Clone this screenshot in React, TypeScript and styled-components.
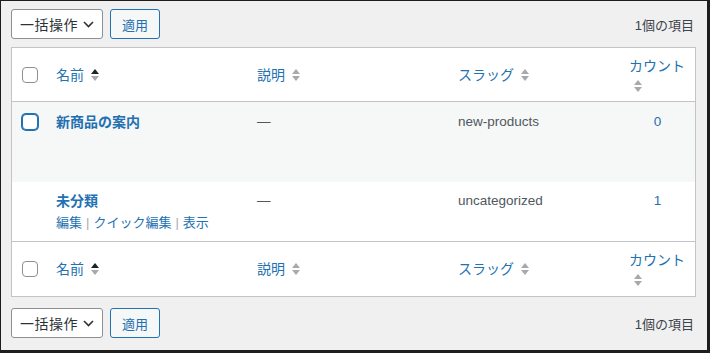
import React from 'react';
import styled, { createGlobalStyle } from 'styled-components';

const GlobalStyle = createGlobalStyle`
  body {
    margin: 0;
    font-family: "Liberation Sans", "Noto Sans CJK JP", sans-serif;
    color: #3c434a;
  }
`;

const COLS = '34px 201px 201px 171px 77px';

const Frame = styled.div`
  box-sizing: border-box;
  width: 710px;
  height: 353px;
  padding: 8px 11px 0 10px;
  background: #f0f0f1;
  border-style: solid;
  border-color: #1d1d1d;
  border-width: 1px 3px 3px 1px;
  display: flex;
  flex-direction: column;
`;

const Toolbar = styled.div<{ $bottom?: boolean }>`
  display: flex;
  align-items: center;
  gap: 7px;
  height: 30px;
  margin-top: ${(p) => (p.$bottom ? '11px' : '0')};
`;

const BulkSelect = styled.button`
  box-sizing: border-box;
  height: 30px;
  width: 92px;
  padding: 0 8px 0 8px;
  display: flex;
  align-items: center;
  justify-content: space-between;
  background: #fff;
  border: 1px solid #8c8f94;
  border-radius: 3px;
  font-family: inherit;
  font-size: 14px;
  letter-spacing: 0.5px;
  color: #2c3338;
  cursor: pointer;
`;

const ApplyButton = styled.button`
  box-sizing: border-box;
  height: 30px;
  padding: 0 11px;
  background: #f6f7f7;
  border: 1px solid #2271b1;
  border-radius: 3px;
  font-family: inherit;
  font-size: 13px;
  color: #2271b1;
  cursor: pointer;
`;

const ItemCount = styled.span`
  margin-left: auto;
  margin-right: 2px;
  font-size: 13px;
  color: #3c434a;
`;

const Table = styled.div`
  margin-top: 8px;
  background: #fff;
  border: 1px solid #c3c4c7;
`;

const HeadRow = styled.div<{ $foot?: boolean }>`
  display: grid;
  grid-template-columns: ${COLS};
  height: ${(p) => (p.$foot ? '54px' : '53px')};
  align-items: center;
  border-bottom: ${(p) => (p.$foot ? 'none' : '1px solid #c3c4c7')};
  border-top: ${(p) => (p.$foot ? '1px solid #c3c4c7' : 'none')};
`;

const HeadCell = styled.div<{ $stacked?: boolean }>`
  padding: 0 10px;
  font-size: 14px;
  color: #2271b1;
  display: flex;
  flex-direction: ${(p) => (p.$stacked ? 'column' : 'row')};
  align-items: ${(p) => (p.$stacked ? 'flex-start' : 'center')};
  gap: ${(p) => (p.$stacked ? '4px' : '7px')};
  white-space: nowrap;
  line-height: 18px;
`;

const IndicatorBox = styled.span`
  display: flex;
  padding-left: 5px;
`;

const CheckCell = styled.div<{ $top?: boolean }>`
  padding-left: 10px;
  align-self: ${(p) => (p.$top ? 'start' : 'center')};
  padding-top: ${(p) => (p.$top ? '12px' : '0')};
  display: flex;
`;

const Checkbox = styled.input.attrs({ type: 'checkbox' })<{ $focus?: boolean }>`
  appearance: none;
  box-sizing: border-box;
  width: 16px;
  height: 16px;
  margin: 0;
  background: #fff;
  border: 1px solid ${(p) => (p.$focus ? '#2271b1' : '#8c8f94')};
  border-radius: 4px;
  box-shadow: ${(p) => (p.$focus ? '0 0 0 1px #2271b1' : 'none')};
`;

const BodyRow = styled.div<{ $alt?: boolean; $height: number }>`
  display: grid;
  grid-template-columns: ${COLS};
  align-items: start;
  height: ${(p) => p.$height}px;
  background: ${(p) => (p.$alt ? '#f6f7f7' : '#fff')};
`;

const Cell = styled.div<{ $center?: boolean; $top: number }>`
  padding: ${(p) => p.$top}px 10px 0;
  font-size: 13.5px;
  line-height: 20px;
  color: #50575e;
  text-align: ${(p) => (p.$center ? 'center' : 'left')};
`;

const RowTitle = styled.a`
  display: block;
  font-size: 14px;
  font-weight: 700;
  line-height: 20px;
  color: #2271b1;
  text-decoration: none;
`;

const RowActions = styled.div`
  margin-top: 2px;
  font-size: 13px;
  line-height: 20px;
  color: #a7aaad;
  white-space: nowrap;
`;

const ActionLink = styled.a`
  color: #2271b1;
  text-decoration: none;
`;

const Sep = styled.span`
  margin: 0 4px;
  color: #a7aaad;
`;

const CountLink = styled.a`
  color: #2271b1;
  text-decoration: none;
`;

const SortIndicator = ({ asc }: { asc?: boolean }) => (
  <svg width="8" height="14" viewBox="0 0 8 14" style={{ flex: 'none' }}>
    <polygon points="0,6 4,1 8,6" fill={asc ? '#1d2327' : '#a7aaad'} />
    <polygon points="0,8 8,8 4,13" fill="#a7aaad" />
  </svg>
);

const Chevron = () => (
  <svg width="11" height="7" viewBox="0 0 11 7">
    <path d="M1 1l4.5 4.5L10 1" fill="none" stroke="#2c3338" strokeWidth="1.6" />
  </svg>
);

const BulkBar = ({ bottom }: { bottom?: boolean }) => (
  <Toolbar $bottom={bottom}>
    <BulkSelect>
      <span>一括操作</span>
      <Chevron />
    </BulkSelect>
    <ApplyButton>適用</ApplyButton>
    <ItemCount>1個の項目</ItemCount>
  </Toolbar>
);

const Head = ({ foot }: { foot?: boolean }) => (
  <HeadRow $foot={foot}>
    <CheckCell>
      <Checkbox />
    </CheckCell>
    <HeadCell>
      <span>名前</span>
      <SortIndicator asc />
    </HeadCell>
    <HeadCell>
      <span>説明</span>
      <SortIndicator />
    </HeadCell>
    <HeadCell>
      <span>スラッグ</span>
      <SortIndicator />
    </HeadCell>
    <HeadCell $stacked>
      <span>カウント</span>
      <IndicatorBox>
        <SortIndicator />
      </IndicatorBox>
    </HeadCell>
  </HeadRow>
);

const terms = [
  { name: '新商品の案内', slug: 'new-products', count: 0, check: true, actions: false, height: 80, top: 10 },
  { name: '未分類', slug: 'uncategorized', count: 1, check: false, actions: true, height: 59, top: 9 },
];

export default function App() {
  return (
    <>
      <GlobalStyle />
      <Frame>
        <BulkBar />
        <Table>
          <Head />
          {terms.map((t, i) => (
            <BodyRow key={t.slug} $alt={i % 2 === 0} $height={t.height}>
              <CheckCell $top>{t.check && <Checkbox $focus />}</CheckCell>
              <Cell $top={t.top}>
                <RowTitle href="#">{t.name}</RowTitle>
                {t.actions && (
                  <RowActions>
                    <ActionLink href="#">編集</ActionLink>
                    <Sep>|</Sep>
                    <ActionLink href="#">クイック編集</ActionLink>
                    <Sep>|</Sep>
                    <ActionLink href="#">表示</ActionLink>
                  </RowActions>
                )}
              </Cell>
              <Cell $top={t.top}>—</Cell>
              <Cell $top={t.top}>{t.slug}</Cell>
              <Cell $top={t.top} $center>
                <CountLink href="#">{t.count}</CountLink>
              </Cell>
            </BodyRow>
          ))}
          <Head foot />
        </Table>
        <BulkBar bottom />
      </Frame>
    </>
  );
}
